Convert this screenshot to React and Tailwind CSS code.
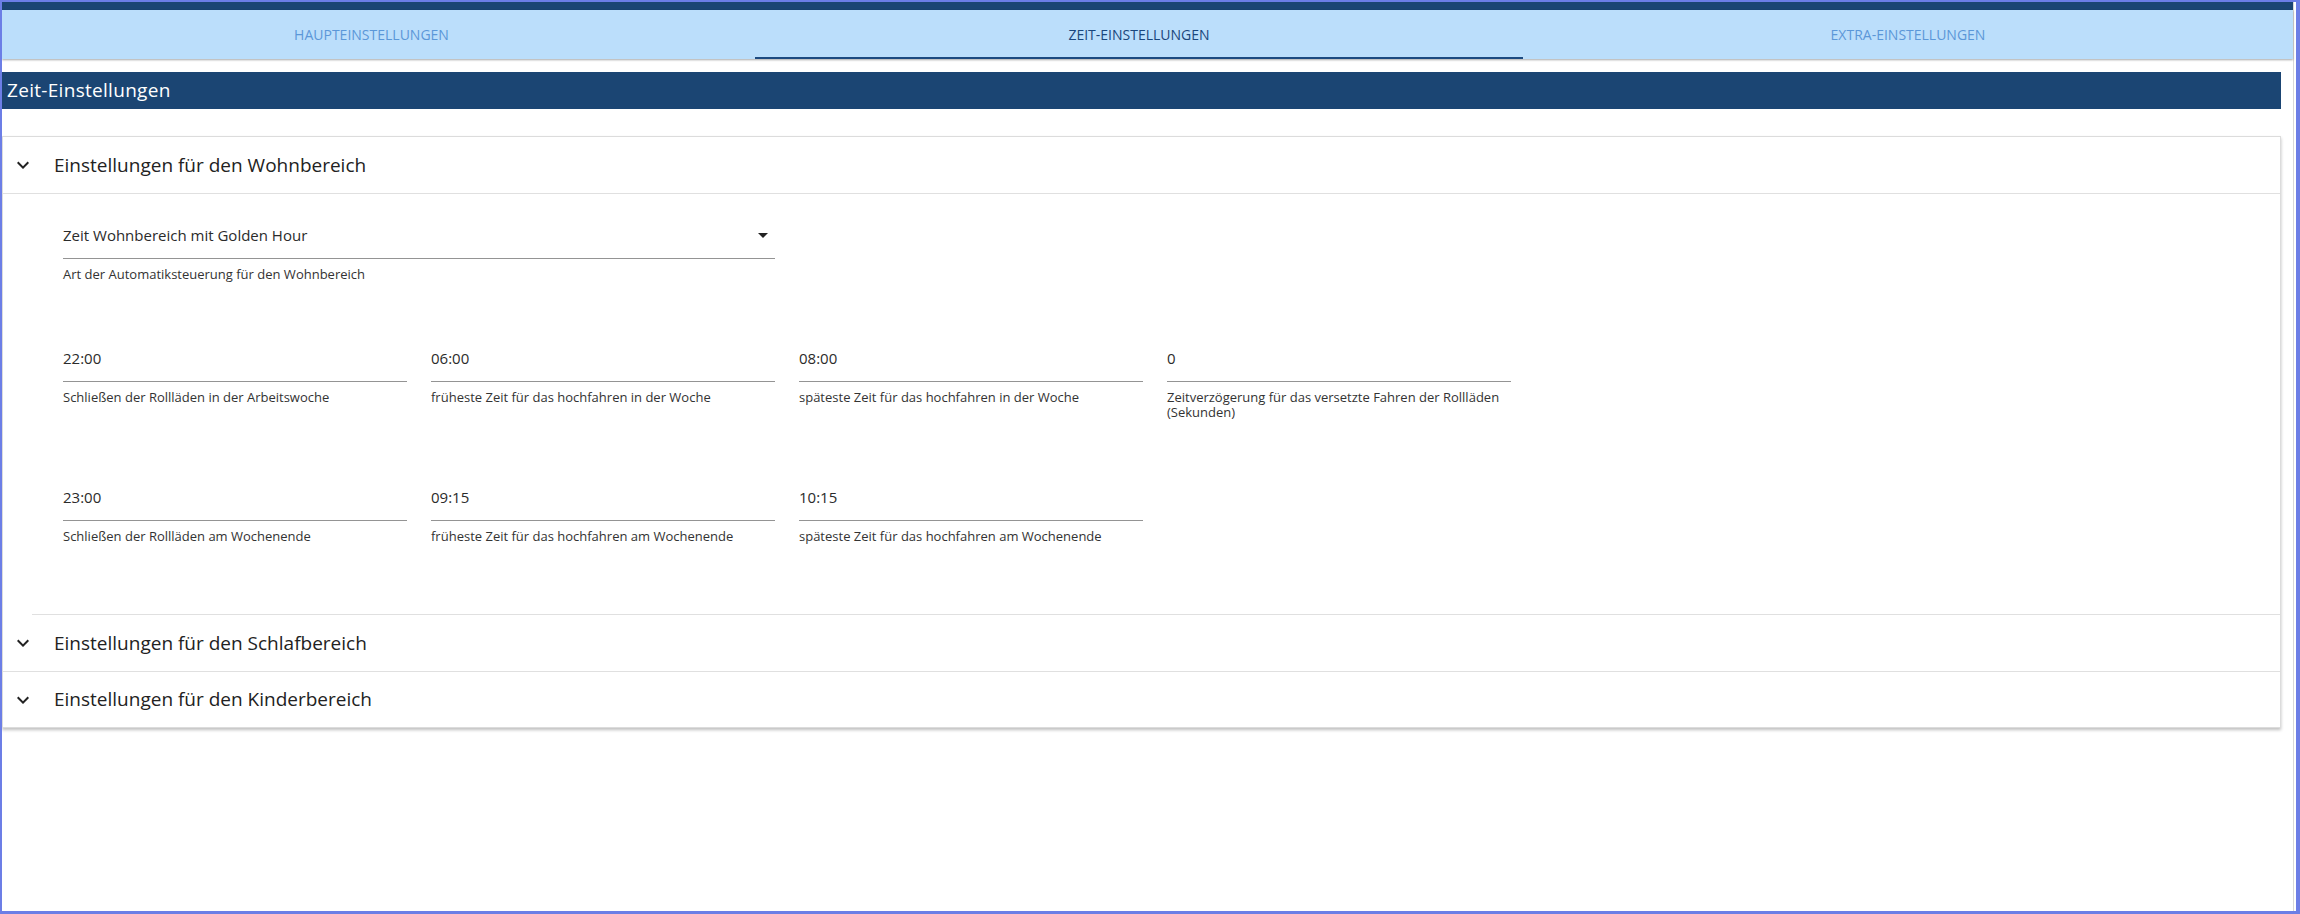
import React from "react";

function Chevron() {
  return (
    <svg viewBox="0 0 24 24" className="w-[24px] h-[24px] shrink-0" fill="#222">
      <path d="M16.59 8.59 12 13.17 7.41 8.59 6 10l6 6 6-6z" />
    </svg>
  );
}

function Field({ value, label, caret, className = "" }) {
  return (
    <div className={className}>
      <div className="relative pb-[11px] border-b border-[#949494] text-[15px] leading-[24px] text-[#2b2b2b]">
        {value}
        {caret && (
          <svg viewBox="0 0 24 24" className="absolute right-0 top-0 w-[24px] h-[24px]" fill="#222">
            <path d="M7 10l5 5 5-5z" />
          </svg>
        )}
      </div>
      <div className="mt-[8px] text-[13px] leading-[15px] text-[#333]">{label}</div>
    </div>
  );
}

function Header({ title, h = "h-[56px]" }) {
  return (
    <div className={h + " flex items-center pl-[8px]"}>
      <Chevron />
      <span className="ml-[19px] text-[19px] text-[#222]">{title}</span>
    </div>
  );
}

export default function App() {
  return (
    <div className="w-[2300px] h-[914px] bg-white border-[#6c7ee6] border-t-2 border-l-2 border-r-4 border-b-[3px] flex overflow-hidden font-['Open_Sans',sans-serif]">
      <div className="flex-1 flex flex-col min-w-0">
        <div className="h-[8px] bg-[#1b4573]" />
        <div className="h-[49px] bg-[#bbdefb] flex shadow-[0_1px_2px_rgba(0,0,0,0.35)] relative z-10">
          <div className="w-[753px] flex items-center justify-center pr-[14px] text-[14px] text-[#5b97d8] uppercase">
            Haupteinstellungen
          </div>
          <div className="w-[768px] flex flex-col">
            <div className="flex-1 flex items-center justify-center pt-[2px] text-[14px] font-medium text-[#1a467c] uppercase">
              Zeit-Einstellungen
            </div>
            <div className="h-[2px] bg-[#1c4a80]" />
          </div>
          <div className="flex-1 flex items-center justify-center text-[14px] text-[#5b97d8] uppercase">
            Extra-Einstellungen
          </div>
        </div>
        <div className="mr-[12px] mt-[13px] h-[37px] bg-[#1b4573] flex items-center pl-[5px] text-[19px] text-white tracking-[0.3px]">
          Zeit-Einstellungen
        </div>
        <div className="mr-[12px] mt-[27px] border border-[#dcdcdc] shadow-[0_2px_3px_rgba(0,0,0,0.25)] bg-white">
          <div className="border-b border-[#e0e0e0]">
            <Header title="Einstellungen für den Wohnbereich" />
          </div>
          <div className="pl-[60px] pt-[29px]">
            <Field
              className="w-[712px]"
              value="Zeit Wohnbereich mit Golden Hour"
              label="Art der Automatiksteuerung für den Wohnbereich"
              caret
            />
            <div className="mt-[64px] grid grid-cols-[344px_344px_344px_344px] gap-x-[24px]">
              <Field value="22:00" label="Schließen der Rollläden in der Arbeitswoche" />
              <Field value="06:00" label="früheste Zeit für das hochfahren in der Woche" />
              <Field value="08:00" label="späteste Zeit für das hochfahren in der Woche" />
              <Field value="0" label="Zeitverzögerung für das versetzte Fahren der Rollläden (Sekunden)" />
            </div>
            <div className="mt-[65px] grid grid-cols-[344px_344px_344px_344px] gap-x-[24px]">
              <Field value="23:00" label="Schließen der Rollläden am Wochenende" />
              <Field value="09:15" label="früheste Zeit für das hochfahren am Wochenende" />
              <Field value="10:15" label="späteste Zeit für das hochfahren am Wochenende" />
            </div>
          </div>
          <div className="mt-[70px] ml-[29px] border-t border-[#e0e0e0]" />
          <div className="border-b border-[#e0e0e0]">
            <Header title="Einstellungen für den Schlafbereich" />
          </div>
          <Header title="Einstellungen für den Kinderbereich" h="h-[55px]" />
        </div>
      </div>
      <div className="w-[3px] border-l border-[#d8d8d8] bg-white" />
    </div>
  );
}
